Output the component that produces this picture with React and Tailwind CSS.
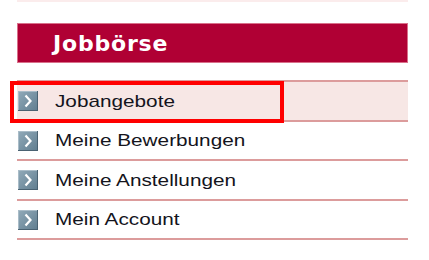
import React from 'react'

const items = [
  { label: 'Jobangebote', h: 'h-[38px]', active: true },
  { label: 'Meine Bewerbungen', h: 'h-[37px]' },
  { label: 'Meine Anstellungen', h: 'h-[38px]' },
  { label: 'Mein Account', h: 'h-[37px]' },
]

function ArrowIcon() {
  return (
    <svg width="20" height="20" viewBox="0 0 20 20" className="shrink-0">
      <defs>
        <linearGradient id="ab" x1="0" y1="0" x2="1" y2="1">
          <stop offset="0" stopColor="#8fa8b7" />
          <stop offset="1" stopColor="#627f91" />
        </linearGradient>
      </defs>
      <rect x="0" y="0" width="20" height="20" fill="#4a6272" />
      <rect x="0" y="0" width="19" height="19" fill="#a9bcc8" />
      <rect x="1" y="1" width="18" height="18" fill="url(#ab)" />
      <path d="M7.5 4.5 L12.5 10 L7.5 15.5" fill="none" stroke="#ffffff" strokeWidth="2.2" />
    </svg>
  )
}

export default function App() {
  return (
    <div className="w-[429px] h-[260px] bg-white font-['Liberation_Sans',Arial,sans-serif]">
      <div className="ml-[17px] w-[391px]">
        <div className="h-[2px] bg-[#fbecec]" />
        <div className="mt-[21px] h-[40px] bg-[#b00034] border border-[#d9708a] flex items-center pl-[35px]">
          <span className="text-white font-bold text-[22px] tracking-[0.8px] font-['DejaVu_Sans',Verdana,sans-serif]">
            Jobbörse
          </span>
        </div>
        <div className="mt-[17px] h-[2px] bg-[#dc9c9c]" />
        {items.map((it) => (
          <div key={it.label} className="relative">
            <div className={`${it.h} flex items-center gap-[17px] pl-[1px] ${it.active ? 'bg-[#f7e7e5]' : ''}`}>
              <ArrowIcon />
              <span className="inline-block origin-left scale-x-[1.22] text-[17px] text-[#14141c] leading-none whitespace-nowrap">
                {it.label}
              </span>
            </div>
            <div className="h-[2px] bg-[#dc9c9c]" />
            {it.active && (
              <div className="absolute left-[-7px] top-[-1px] w-[274px] h-[42px] border-[4px] border-[#ff0000]" />
            )}
          </div>
        ))}
      </div>
    </div>
  )
}
